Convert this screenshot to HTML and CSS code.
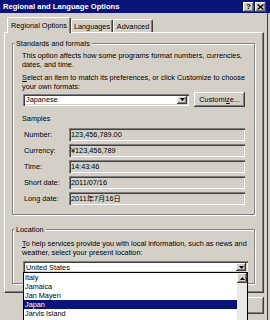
FILE: index.html
```html
<!DOCTYPE html>
<html>
<head>
<meta charset="utf-8">
<link rel="stylesheet" href="styles.css">
</head>
<body>
<div class="titlebar">
  <span class="title">Regional and Language Options</span>
  <div class="tbtns">
    <span class="tbtn">?</span>
    <span class="tbtn"><svg width="7" height="6" viewBox="0 0 7 6"><path d="M0.5 0.5 L6.5 5.5 M6.5 0.5 L0.5 5.5" stroke="#000" stroke-width="1.4"/></svg></span>
  </div>
</div>
<div class="main">
  <div class="tabs">
    <div class="tab active">Regional Options</div>
    <div class="tab t-lang">Languages</div>
    <div class="tab t-adv">Advanced</div>
  </div>
  <div class="panel">
    <fieldset class="group g1">
      <legend>Standards and formats</legend>
      <p>This option affects how some programs format numbers, currencies,<br>dates, and time.</p>
      <p class="p2"><u>S</u>elect an item to match its preferences, or click Customize to choose<br>your own formats:</p>
      <div class="row">
        <div class="combo c-fmt"><span class="ctext">Japanese</span><span class="arrow"><svg width="5" height="3" viewBox="0 0 5 3"><path d="M0 0 H5 L2.5 3 Z" fill="#000"/></svg></span></div>
        <div class="btn customize">Customi<u>z</u>e...</div>
      </div>
      <div class="samples">Samples</div>
      <div class="srow first"><span class="lbl">Number:</span><span class="field">123,456,789.00</span></div>
      <div class="srow"><span class="lbl">Currency:</span><span class="field">¥123,456,789</span></div>
      <div class="srow"><span class="lbl">Time:</span><span class="field">14:43:46</span></div>
      <div class="srow"><span class="lbl">Short date:</span><span class="field">2011/07/16</span></div>
      <div class="srow"><span class="lbl">Long date:</span><span class="field">2011年7月16日</span></div>
    </fieldset>
    <fieldset class="group g2">
      <legend>Location</legend>
      <p><u>T</u>o help services provide you with local information, such as news and<br>weather, select your present location:</p>
      <div class="combo c-loc"><span class="ctext">United States</span><span class="arrow"><svg width="5" height="3" viewBox="0 0 5 3"><path d="M0 0 H5 L2.5 3 Z" fill="#000"/></svg></span></div>
    </fieldset>
  </div>
  <div class="dlgbtns">
    <div class="btn dbtn">OK</div>
    <div class="btn dbtn">Cancel</div>
    <div class="btn dbtn">Apply</div>
  </div>
</div>
<div class="dropdown">
  <ul class="items">
    <li>Italy</li>
    <li>Jamaica</li>
    <li>Jan Mayen</li>
    <li class="sel">Japan</li>
    <li>Jarvis Island</li>
    <li>Jersey</li>
  </ul>
  <div class="scrollbar">
    <div class="sbtn"><svg width="5" height="3" viewBox="0 0 5 3"><path d="M0 3 H5 L2.5 0 Z" fill="#000"/></svg></div>
    <div class="track"></div>
  </div>
</div>
</body>
</html>
```

FILE: styles.css
```css
* { box-sizing: border-box; }
html {
  margin: 0;
  padding: 0;
  width: 270px;
  height: 320px;
  overflow: hidden;
}
body {
  margin: 0;
  padding: 0;
  width: 270px;
  height: 320px;
  overflow: hidden;
  position: relative;
  background: #d4d0c8;
  font-family: "Liberation Sans", "Noto Sans CJK JP", sans-serif;
  font-size: 7.3px;
  line-height: 9px;
  color: #000;
}
u { text-decoration: underline; }

.titlebar {
  height: 13px;
  background: #0a1478;
  display: flex;
  align-items: center;
  justify-content: space-between;
  padding: 0 4px 0 3px;
}
.title { color: #fff; font-weight: bold; font-size: 7.6px; white-space: nowrap; }
.tbtns { display: flex; gap: 1px; }
.tbtn {
  width: 11px;
  height: 10px;
  background: #d4d0c8;
  box-shadow: inset -1px -1px #404040, inset 1px 1px #fff, inset -2px -2px #808080;
  font-weight: bold;
  font-size: 8px;
  line-height: 10px;
  display: flex;
  align-items: center;
  justify-content: center;
}

.main {
  width: 268px;
  height: 307px;
  border-right: 1px solid #404040;
  padding: 4px 0 0 4px;
  overflow: hidden;
}

.tabs {
  display: flex;
  align-items: flex-end;
  height: 16px;
  padding-left: 3px;
  position: relative;
  z-index: 2;
}
.tab {
  height: 13px;
  margin-bottom: 1px;
  padding-top: 2px;
  text-align: center;
  white-space: nowrap;
  border-left: 1px solid #fff;
  border-top: 1px solid #fff;
  border-right: 1px solid #404040;
  box-shadow: inset -1px 0 #808080;
  border-radius: 2px 2px 0 0;
  background: #d4d0c8;
}
.tab.active { width: 64px; height: 16px; margin-bottom: 0; padding-top: 3px; }
.t-lang { width: 42px; }
.t-adv { width: 40px; }

.panel {
  margin-top: -1px;
  width: 260px;
  height: 261px;
  border-top: 1px solid #fff;
  border-left: 1px solid #fff;
  border-right: 1px solid #404040;
  border-bottom: 1px solid #404040;
  box-shadow: inset -1px -1px #808080;
  padding: 6px 0 0 7px;
  position: relative;
  z-index: 1;
}

.group {
  display: block;
  margin: 0;
  width: 243px;
  min-width: 0;
  border: 1px solid #808080;
  box-shadow: inset 1px 1px #fff, 1px 1px #fff;
  padding: 3px 9px 9px 9px;
}
.group legend {
  padding: 0 2px;
  margin-left: -8px;
  background: #d4d0c8;
  line-height: 9px;
  white-space: nowrap;
}
.g2 { margin-top: 10px; padding-top: 5px; padding-bottom: 10px; }

p { margin: 0; white-space: nowrap; }
.p2 { margin-top: 4px; }

.row {
  display: flex;
  align-items: center;
  margin-top: 1px;
  height: 15px;
  gap: 5px;
  padding-left: 1px;
}

.combo {
  height: 12px;
  background: #fff;
  box-shadow: inset 1px 1px #808080, inset 2px 2px #404040, inset -1px -1px #fff, inset -2px -2px #d4d0c8;
  display: flex;
  align-items: center;
  padding: 0 2px 0 3px;
  white-space: nowrap;
}
.ctext { flex: 1; }
.c-fmt { width: 167px; }
.c-loc { width: 225px; margin-top: 4px; margin-left: 1px; }
.arrow {
  width: 10px;
  height: 8px;
  background: #d4d0c8;
  box-shadow: inset -1px -1px #404040, inset 1px 1px #fff, inset -2px -2px #808080;
  display: flex;
  align-items: center;
  justify-content: center;
}
.arrow svg, .sbtn svg { display: block; }

.btn {
  background: #d4d0c8;
  box-shadow: inset -1px -1px #404040, inset 1px 1px #fff, inset -2px -2px #808080;
  display: flex;
  align-items: center;
  justify-content: center;
  white-space: nowrap;
}
.customize { width: 51px; height: 15px; }

.samples { margin-top: 7px; }

.srow {
  display: flex;
  align-items: center;
  height: 13px;
  margin-top: 3px;
  padding-left: 2px;
  white-space: nowrap;
}
.srow.first { margin-top: 5px; }
.lbl { width: 45px; }
.field {
  width: 176px;
  height: 13px;
  line-height: 13px;
  padding-left: 2px;
  box-shadow: inset 1px 1px #808080, inset 2px 2px #404040, inset -1px -1px #fff, inset -2px -2px #d4d0c8;
}

.dlgbtns {
  width: 260px;
  display: flex;
  justify-content: flex-end;
  gap: 4px;
  margin-top: 4px;
}
.dbtn { width: 60px; height: 17px; }

.dropdown {
  position: absolute;
  left: 23px;
  top: 272px;
  width: 225px;
  height: 48px;
  border: 1px solid #000;
  border-bottom: 0;
  background: #fff;
  display: flex;
  overflow: hidden;
  z-index: 5;
}
.items {
  list-style: none;
  margin: 0;
  padding: 0;
  flex: 1;
}
.items li {
  height: 9px;
  line-height: 9px;
  padding-left: 1px;
  white-space: nowrap;
}
.items li.sel { background: #0a1478; color: #fff; }
.scrollbar {
  width: 10px;
  display: flex;
  flex-direction: column;
}
.sbtn {
  height: 10px;
  background: #d4d0c8;
  box-shadow: inset -1px -1px #404040, inset 1px 1px #fff, inset -2px -2px #808080;
  display: flex;
  align-items: center;
  justify-content: center;
}
.track { flex: 1; background: #ebe9e5; }
```
